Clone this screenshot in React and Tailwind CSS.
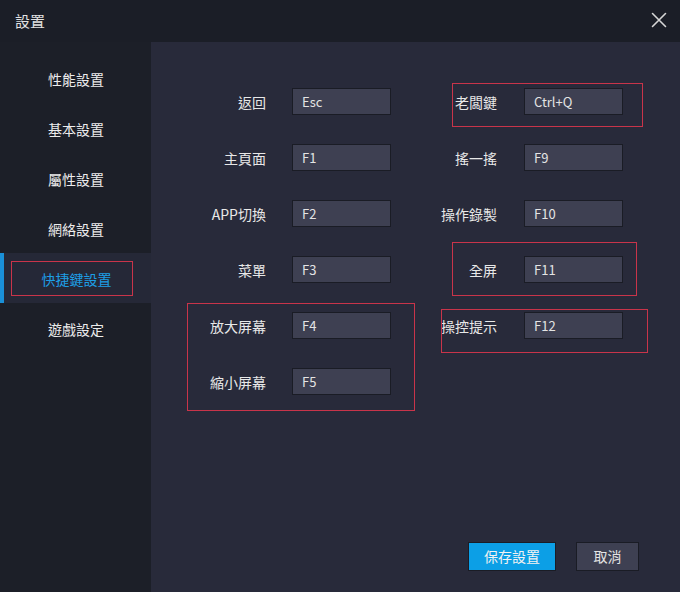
import React from 'react';

const menu = ['性能設置', '基本設置', '屬性設置', '網絡設置', '快捷鍵設置', '遊戲設定'];

const leftKeys = [
  ['返回', 'Esc'],
  ['主頁面', 'F1'],
  ['APP切換', 'F2'],
  ['菜單', 'F3'],
  ['放大屏幕', 'F4'],
  ['縮小屏幕', 'F5'],
];

const rightKeys = [
  ['老闆鍵', 'Ctrl+Q'],
  ['搖一搖', 'F9'],
  ['操作錄製', 'F10'],
  ['全屏', 'F11'],
  ['操控提示', 'F12'],
];

function KeyRow({ label, value, labelW }) {
  return (
    <div className="flex items-center h-[27px]">
      <div className={`${labelW} text-right text-[14px] text-[#e8e8e8] shrink-0 mt-[2px]`}>{label}</div>
      <div className="w-[99px] h-[27px] bg-[#3e4052] border border-[#1a1c25] flex items-center pl-[9px] text-[13px] text-[#e4e4e4]">
        {value}
      </div>
    </div>
  );
}

export default function App() {
  return (
    <div
      className="w-[680px] h-[592px] flex flex-col bg-[#1b1e27] overflow-hidden"
      style={{ fontFamily: '"Noto Sans CJK TC", "Noto Sans", sans-serif' }}
    >
      {/* Title bar */}
      <div className="h-[42px] flex items-center justify-between pl-[15px] pr-[13px] shrink-0">
        <span className="text-[15px] text-[#e2e2e2]">設置</span>
        <svg width="16" height="16" viewBox="0 0 16 16" className="mt-[-3px]">
          <path d="M1.5 1.5 L14.5 14.5 M14.5 1.5 L1.5 14.5" stroke="#d6d6d6" strokeWidth="1.6" strokeLinecap="round" />
        </svg>
      </div>

      <div className="flex flex-1">
        {/* Sidebar */}
        <div className="w-[151px] shrink-0 pt-[11px] flex flex-col bg-[#1c1f28]">
          {menu.map((m, i) => {
            const active = i === 4;
            return (
              <div
                key={m}
                className={`relative h-[50px] flex items-center justify-center text-[14px] ${
                  active ? 'bg-[#252837] text-[#1d9ee6]' : 'text-[#ececec]'
                }`}
              >
                {active && <div className="absolute left-0 top-0 bottom-0 w-[4px] bg-[#1a90d8]" />}
                {active && (
                  <div className="absolute left-[11px] top-[8px] w-[122px] h-[35px] border border-[#c9344a]" />
                )}
                <span className={active ? 'ml-[2px] mt-[2px]' : 'ml-[1px] mt-[2px]'}>{m}</span>
              </div>
            );
          })}
        </div>

        {/* Content */}
        <div className="relative flex-1 bg-[#282a3a] flex flex-col">
          <div className="flex pl-[36px] pt-[46px]">
            <div className="flex flex-col gap-[29px]">
              {leftKeys.map(([l, v]) => (
                <KeyRow key={l} label={l} value={v} labelW="w-[79px] mr-[26px]" />
              ))}
            </div>
            <div className="flex flex-col gap-[29px] ml-[29px]">
              {rightKeys.map(([l, v]) => (
                <KeyRow key={l} label={l} value={v} labelW="w-[77px] mr-[27px]" />
              ))}
            </div>
          </div>

          {/* annotation boxes */}
          <div className="absolute left-[301px] top-[41px] w-[191px] h-[44px] border border-[#c9344a]" />
          <div className="absolute left-[301px] top-[200px] w-[185px] h-[54px] border border-[#c9344a]" />
          <div className="absolute left-[290px] top-[267px] w-[207px] h-[44px] border border-[#c9344a]" />
          <div className="absolute left-[36px] top-[261px] w-[228px] h-[108px] border border-[#c9344a]" />

          <div className="mt-auto flex justify-end gap-[20px] pr-[41px] pb-[21px]">
            <button className="w-[88px] h-[29px] bg-[#0c9fe6] border border-[#1a1c25] text-[14px] text-[#f2f2f2]">
              保存設置
            </button>
            <button className="w-[63px] h-[29px] bg-[#3e4052] border border-[#1a1c25] text-[14px] text-[#e4e4e4]">
              取消
            </button>
          </div>
        </div>
      </div>
    </div>
  );
}
